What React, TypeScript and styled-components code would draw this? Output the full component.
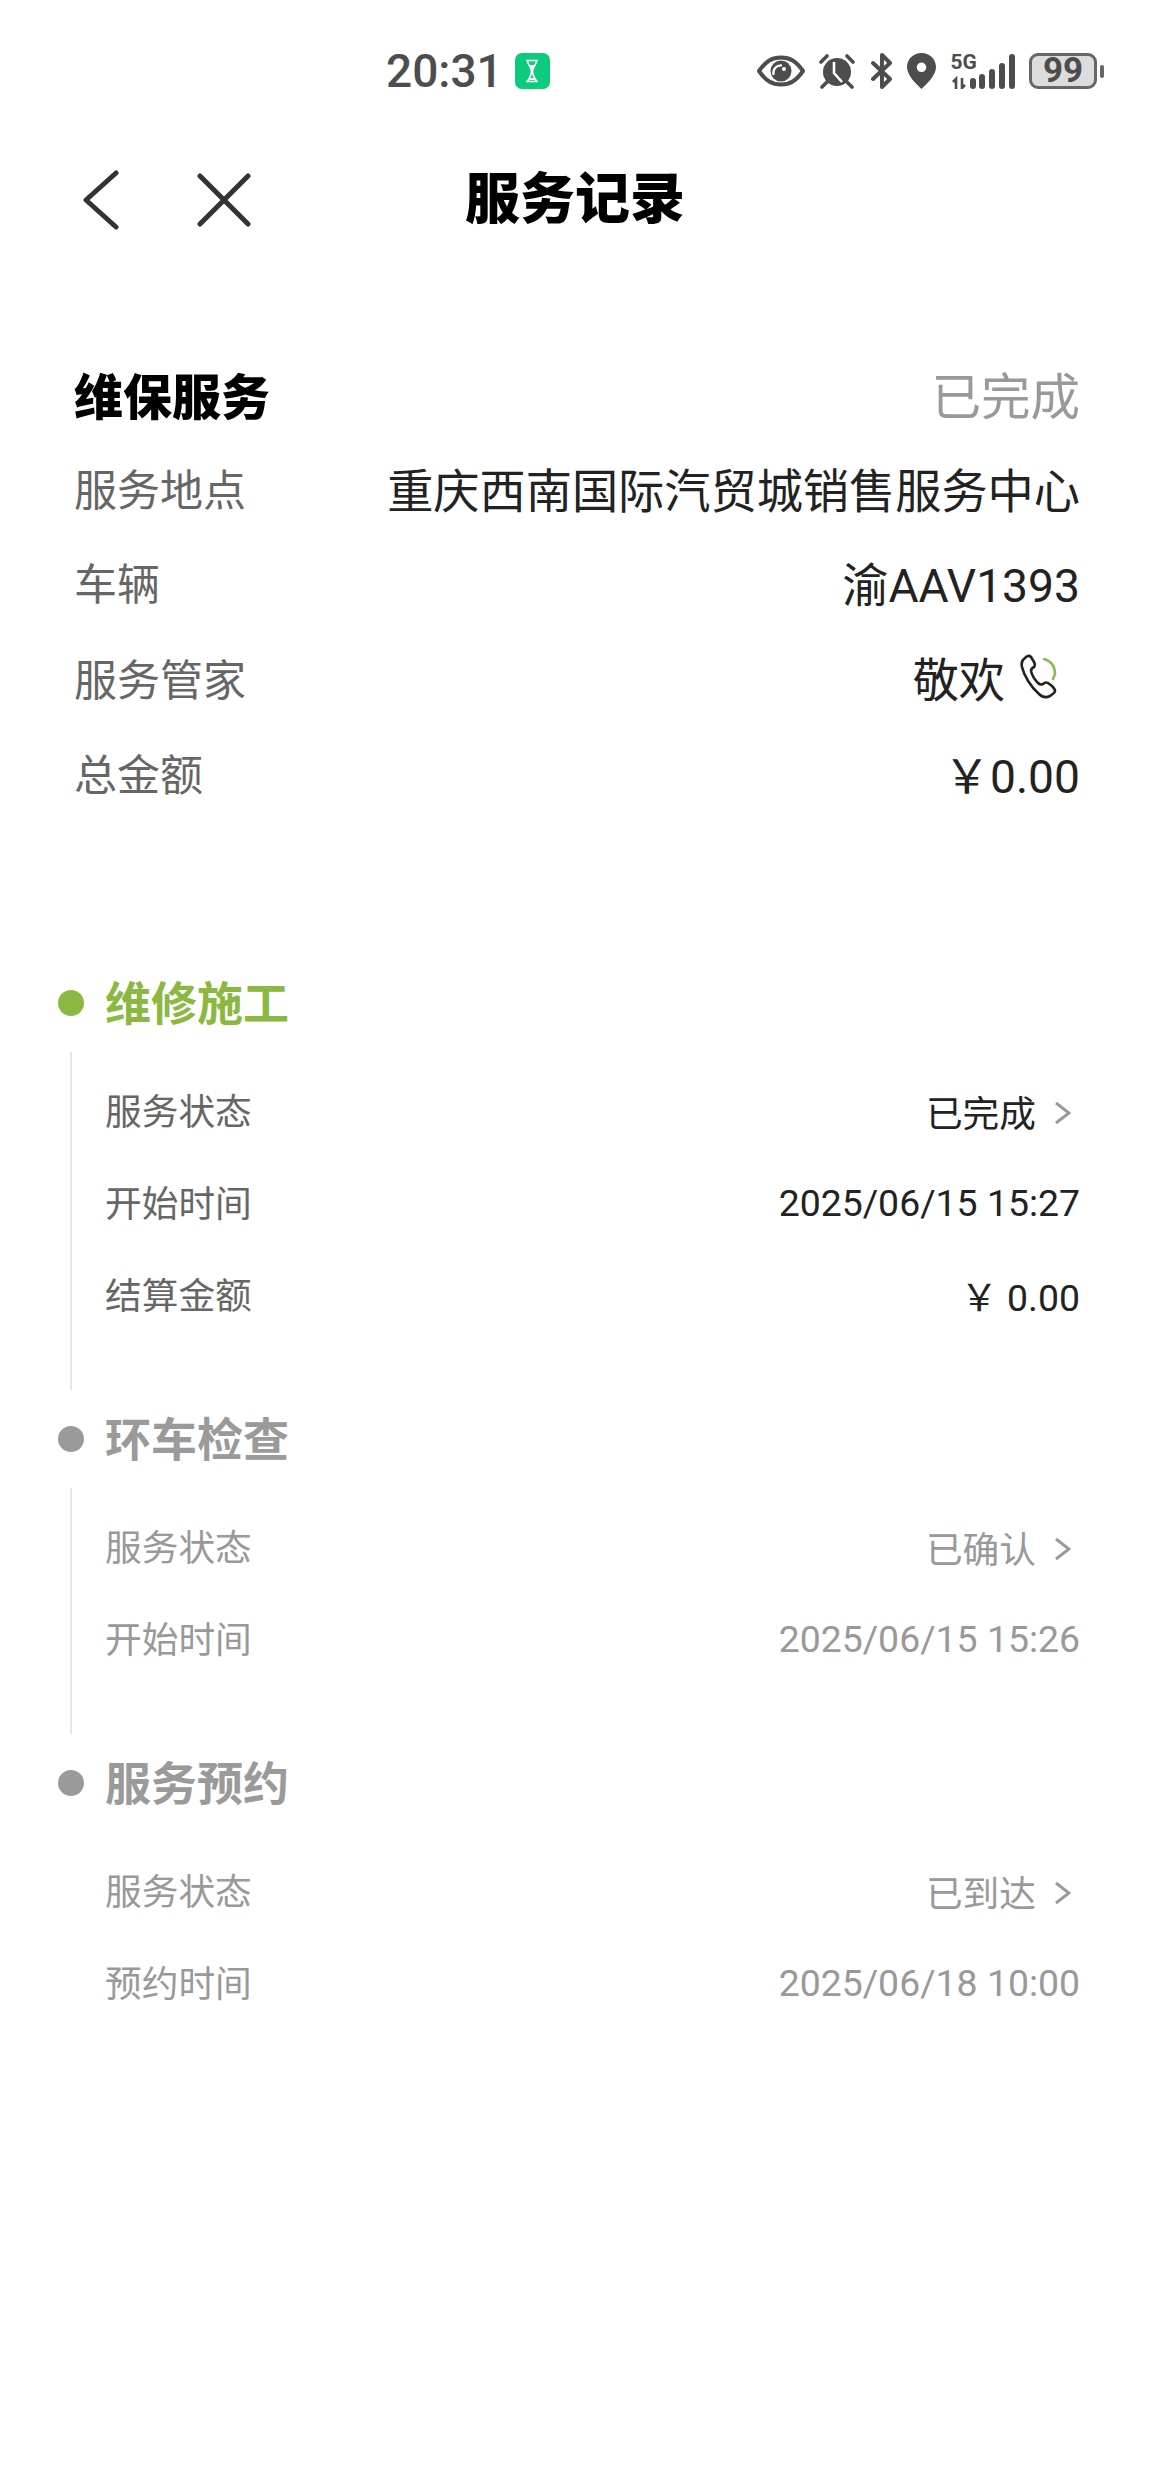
import { createGlobalStyle, styled } from "styled-components"

const GlobalStyle = createGlobalStyle`
  html, body {
    margin: 0;
    padding: 0;
    background: #fff;
  }
  body {
    font-family: Roboto, "Noto Sans CJK SC", sans-serif;
  }
`

type Row = {
  label: string;
  value: string;
  arrow?: boolean;
};

type Section = {
  title: string;
  active?: boolean;
  last?: boolean;
  rows: Row[];
};

const sections: Section[] = [
  {
    title: "维修施工",
    active: true,
    rows: [
      { label: "服务状态", value: "已完成", arrow: true },
      { label: "开始时间", value: "2025/06/15 15:27" },
      { label: "结算金额", value: "￥ 0.00" },
    ],
  },
  {
    title: "环车检查",
    rows: [
      { label: "服务状态", value: "已确认", arrow: true },
      { label: "开始时间", value: "2025/06/15 15:26" },
    ],
  },
  {
    title: "服务预约",
    last: true,
    rows: [
      { label: "服务状态", value: "已到达", arrow: true },
      { label: "预约时间", value: "2025/06/18 10:00" },
    ],
  },
]

const ink = "#4d4d4d"

function StatusIcons() {
  return (
    <Icons>
      <svg width="48" height="32" viewBox="0 0 48 32">
        <path d="M2 16C9 6 15 2.500 24 2.500S39 6 46 16c-7 10-13 13.500-22 13.500S9 26 2 16z" fill="none" stroke={ink} strokeWidth="4" strokeLinejoin="round" />
        <circle cx="24" cy="16" r="10.500" fill={ink} />
        <path d="M16.500 20c-1-6 3-10 8.500-9.500" fill="none" stroke="#fff" strokeWidth="2.200" />
        <circle cx="27" cy="14" r="2" fill="#fff" />
      </svg>
      <svg width="36" height="36" viewBox="0 0 36 36">
        <path d="M2 9l6-6M34 9l-6-6M8 29l-5 5M28 29l5 5" fill="none" stroke={ink} strokeWidth="3.600" strokeLinecap="round" />
        <circle cx="18" cy="19" r="14" fill={ink} />
        <path d="M15 9v11l8 9" fill="none" stroke="#fff" strokeWidth="2.600" />
      </svg>
      <svg width="23" height="36" viewBox="0 0 23 36">
        <path d="M3 10l17 16-8 8V20M12 15V2l8 8L3 26" fill="none" stroke={ink} strokeWidth="4" strokeLinejoin="round" strokeLinecap="round" />
      </svg>
      <svg width="29" height="36" viewBox="0 0 29 36">
        <path fillRule="evenodd" d="M14.500 0C6 0 0 6.500 0 14c0 8 8.500 16.500 14.500 22C20.500 30.500 29 22 29 14 29 6.500 23 0 14.500 0zm0 9.500a4.800 4.800 0 1 1 0 9.600 4.800 4.800 0 0 1 0-9.600z" fill={ink} />
      </svg>
      <SignalBox>
        <NetLabel>5G</NetLabel>
        <svg width="64" height="36" viewBox="0 0 64 36">
          <path d="M5 36V26l-3 3M11 25v10l3-3" stroke={ink} strokeWidth="2.600" fill="none" />
          <rect x="19" y="25" width="6" height="11" rx="3" fill={ink} />
          <rect x="28" y="21" width="6" height="15" rx="3" fill={ink} />
          <rect x="38" y="16" width="6" height="20" rx="3" fill={ink} />
          <rect x="48" y="10" width="6" height="26" rx="3" fill={ink} />
          <rect x="58" y="1" width="6" height="35" rx="3" fill={ink} />
        </svg>
      </SignalBox>
      <Battery>
        <BatteryBody>99</BatteryBody>
        <BatteryCap />
      </Battery>
    </Icons>
  )
}

function PhoneIcon() {
  return (
    <svg width="40" height="46" viewBox="0 0 40 46">
      <path d="M5 4c-3 2-4 5-3 9 2 9 9 20 17 27 3 3 7 4 11 2 3-2 5-4 5-5 0-2-1-3-3-5l-4-3c-2-1-3-1-5 1-2 1-3 1-5-1-3-3-6-8-7-12 0-2 1-3 3-4 1-1 1-3 0-5l-3-5C9 1 7 2 5 4z" fill="none" stroke="#222" strokeWidth="2.600" strokeLinejoin="round" />
      <path d="M24 5c7 2 11 7 11 15l-2 5" fill="none" stroke="#8fbb55" strokeWidth="2.600" strokeLinecap="round" />
    </svg>
  )
}

export default function App() {
  return (
    <Page>
      <GlobalStyle />
      <StatusBar>
        <TimeBox>
          <Time>20:31</Time>
          <Badge>
            <svg width="16" height="24" viewBox="0 0 16 24">
              <path d="M2 1.500h12M2 22.500h12M3.500 2c0 6 9 7 0 20M12.500 2c0 6-9 7 0 20" fill="none" stroke="#fff" strokeWidth="1.600" />
              <path d="M5 6h6l-3 4zM4.500 21c1-3 6-3 7 0z" fill="#fff" />
            </svg>
          </Badge>
        </TimeBox>
        <StatusIcons />
      </StatusBar>

      <NavBar>
        <NavIcons>
          <svg width="38" height="60" viewBox="0 0 38 60">
            <path d="M34 3L4 30l30 27" fill="none" stroke="#333" strokeWidth="5" strokeLinecap="round" strokeLinejoin="round" />
          </svg>
          <svg width="54" height="54" viewBox="0 0 54 54">
            <path d="M3 3l48 48M51 3L3 51" fill="none" stroke="#333" strokeWidth="5" strokeLinecap="round" />
          </svg>
        </NavIcons>
        <NavTitle>服务记录</NavTitle>
      </NavBar>

      <Summary>
        <SummaryHead>
          <SummaryTitle>维保服务</SummaryTitle>
          <SummaryStatus>已完成</SummaryStatus>
        </SummaryHead>
        <SummaryRow>
          <SummaryLabel>服务地点</SummaryLabel>
          <SummaryValue>重庆西南国际汽贸城销售服务中心</SummaryValue>
        </SummaryRow>
        <SummaryRow>
          <SummaryLabel>车辆</SummaryLabel>
          <SummaryValue>渝AAV1393</SummaryValue>
        </SummaryRow>
        <SummaryRow $tall>
          <SummaryLabel>服务管家</SummaryLabel>
          <SummaryValue>
            敬欢
            <PhoneSlot>
              <PhoneIcon />
            </PhoneSlot>
          </SummaryValue>
        </SummaryRow>
        <SummaryRow>
          <SummaryLabel>总金额</SummaryLabel>
          <SummaryValue>￥0.00</SummaryValue>
        </SummaryRow>
      </Summary>

      <Timeline>
        {sections.map((section) => (
          <TimelineSection key={section.title}>
            <SectionHead>
              <Dot $active={section.active} />
              <SectionTitle $active={section.active}>{section.title}</SectionTitle>
            </SectionHead>
            <SectionBody $last={section.last}>
              {section.rows.map((row) => (
                <DetailRow key={row.label}>
                  <DetailLabel $active={section.active}>{row.label}</DetailLabel>
                  <DetailValue $active={section.active} $arrow={row.arrow}>
                    {row.value}
                    {row.arrow && (
                      <Chevron width="17" height="24" viewBox="0 0 17 24">
                        <path d="M2 2l13 10L2 22" fill="none" stroke="#999" strokeWidth="3" />
                      </Chevron>
                    )}
                  </DetailValue>
                </DetailRow>
              ))}
            </SectionBody>
          </TimelineSection>
        ))}
      </Timeline>
    </Page>
  )
}

const Page = styled.div`
  width: 1150px;
  height: 2475px;
  background: #fff;
  overflow: hidden;
`
const StatusBar = styled.div`
  height: 142px;
  box-sizing: border-box;
  padding-left: 386px;
  padding-right: 46px;
  display: flex;
  align-items: center;
  justify-content: space-between;
`
const TimeBox = styled.div`
  display: flex;
  align-items: center;
  gap: 12px;
`
const Time = styled.span`
  font-size: 46px;
  font-weight: 500;
  color: #4d4d4d;
`
const Badge = styled.span`
  width: 35px;
  height: 36px;
  border-radius: 7px;
  background: #0ccb7c;
  display: flex;
  align-items: center;
  justify-content: center;
`
const Icons = styled.div`
  display: flex;
  align-items: center;
  gap: 14.5px;
`
const SignalBox = styled.div`
  position: relative;
  width: 64px;
  height: 36px;
`
const NetLabel = styled.span`
  position: absolute;
  left: 0;
  top: -3px;
  font-family: "Liberation Sans Narrow", Roboto, sans-serif;
  font-size: 21px;
  font-weight: 700;
  color: #4d4d4d;
`
const Battery = styled.div`
  display: flex;
  align-items: center;
  gap: 3px;
`
const BatteryBody = styled.div`
  width: 68px;
  height: 36px;
  box-sizing: border-box;
  border: 3px solid #666;
  border-radius: 9px;
  background: #dcdcdc;
  color: #4d4d4d;
  font-size: 35px;
  font-weight: 700;
  line-height: 30px;
  text-align: center;
`
const BatteryCap = styled.div`
  width: 4px;
  height: 13px;
  border-radius: 2px;
  background: #666;
`
const NavBar = styled.div`
  height: 116px;
  display: grid;
  grid-template-columns: 1fr auto 1fr;
  align-items: center;
`
const NavIcons = styled.div`
  display: flex;
  align-items: center;
  gap: 77px;
  padding-left: 82px;
`
const NavTitle = styled.div`
  font-size: 55px;
  font-weight: 900;
  color: #000;
  padding-bottom: 12px;
`
const Summary = styled.div`
  margin-top: 88px;
  padding: 0 70px 0 74px;
`
const SummaryHead = styled.div`
  height: 94px;
  display: flex;
  align-items: center;
  justify-content: space-between;
`
const SummaryTitle = styled.div`
  font-size: 49px;
  font-weight: 900;
  color: #000;
`
const SummaryStatus = styled.div`
  font-size: 49.500px;
  color: #999;
`
const SummaryRow = styled.div<{ $tall?: boolean }>`
  height: ${(p) => (p.$tall ? "97px" : "94px")};
  display: flex;
  align-items: center;
  justify-content: space-between;
`
const SummaryLabel = styled.div`
  font-size: 43px;
  color: #666;
`
const SummaryValue = styled.div`
  display: flex;
  align-items: center;
  font-size: 46.200px;
  color: #222;
`
const PhoneSlot = styled.span`
  display: flex;
  margin-left: 15px;
  margin-right: 20px;
`
const Timeline = styled.div`
  margin-top: 154px;
`
const TimelineSection = styled.section`
  margin-bottom: 19px;
`
const SectionHead = styled.div`
  height: 60px;
  display: flex;
  align-items: center;
  padding-left: 58px;
  margin-bottom: 19px;
`
const Dot = styled.span<{ $active?: boolean }>`
  width: 26px;
  height: 26px;
  border-radius: 50%;
  margin-right: 21px;
  background: ${(p) => (p.$active ? "#8ab840" : "#9a9a9a")};
`
const SectionTitle = styled.div<{ $active?: boolean }>`
  font-size: 46px;
  font-weight: 700;
  padding-bottom: 6px;
  color: ${(p) => (p.$active ? "#8ab840" : "#9a9a9a")};
`
const SectionBody = styled.div<{ $last?: boolean }>`
  margin-left: 70px;
  padding: 13px 70px 49px 33px;
  border-left: 2px solid ${(p) => (p.$last ? "transparent" : "#e6e6e6")};
`
const DetailRow = styled.div`
  height: 92px;
  display: flex;
  align-items: center;
  justify-content: space-between;
`
const DetailLabel = styled.div<{ $active?: boolean }>`
  font-size: 36.700px;
  padding-bottom: 4px;
  color: ${(p) => (p.$active ? "#666" : "#999")};
`
const DetailValue = styled.div<{ $active?: boolean; $arrow?: boolean }>`
  display: flex;
  align-items: center;
  gap: 18px;
  font-size: ${(p) => (p.$arrow ? "36.700px" : "37.400px")};
  padding-right: ${(p) => (p.$arrow ? "9px" : "0")};
  color: ${(p) => (p.$active ? "#222" : "#999")};
`
const Chevron = styled.svg`
  margin-top: 4px;
`
